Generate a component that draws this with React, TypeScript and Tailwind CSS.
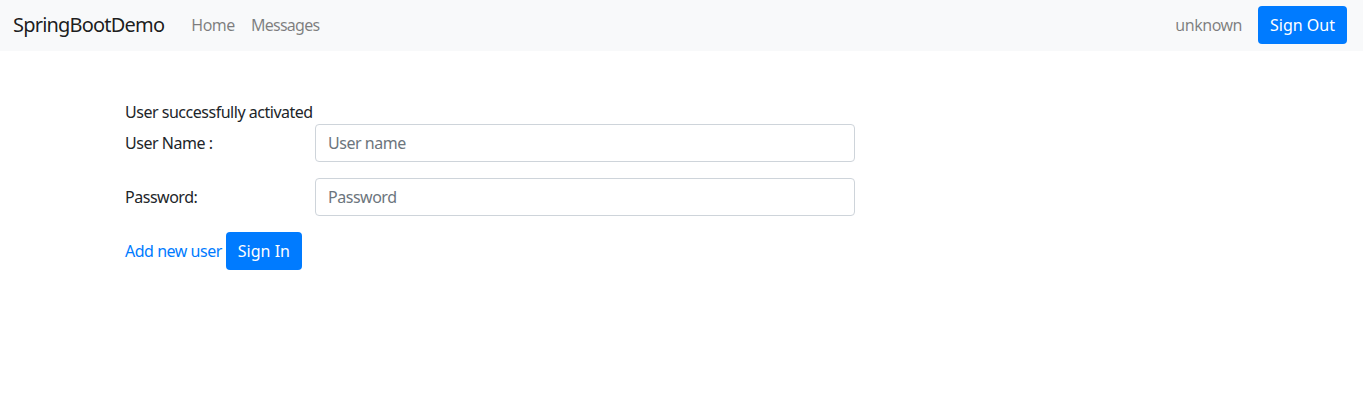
export default function App() {
  const font = { fontFamily: '"Noto Sans", "Liberation Sans", sans-serif' };
  return (
    <div className="min-h-[405px] bg-white text-[#212529] tracking-[-0.03em]" style={font}>
      <nav className="flex h-[51px] items-center justify-between bg-[#f8f9fa] pb-[2px] pl-[13px] pr-[16px]">
        <div className="flex items-center">
          <a href="#" className="mr-[19px] text-[20px] leading-[30px] tracking-[-0.04em] text-[rgba(0,0,0,0.9)]">
            SpringBootDemo
          </a>
          <a href="#" className="px-[8px] text-[16px] leading-[24px] text-[rgba(0,0,0,0.5)]">
            Home
          </a>
          <a href="#" className="px-[8px] text-[16px] leading-[24px] tracking-[-0.045em] text-[rgba(0,0,0,0.5)]">
            Messages
          </a>
        </div>
        <div className="flex items-center">
          <span className="mr-[16px] text-[16px] leading-[24px] text-[rgba(0,0,0,0.5)]">unknown</span>
          <button className="h-[38px] rounded-[4px] bg-[#007bff] px-[12px] text-[16px] tracking-normal text-white">
            Sign Out
          </button>
        </div>
      </nav>

      <div className="pl-[125px] pt-[49px]">
        <p className="text-[16px] leading-[24px]">User successfully activated</p>
        <form className="flex flex-col gap-[16px]">
          <div className="flex items-center">
            <label className="w-[190px] text-[16px] leading-[24px]">User Name :</label>
            <input
              type="text"
              placeholder="User name"
              className="h-[38px] w-[540px] rounded-[4px] border border-[#ced4da] px-[12px] text-[16px] placeholder:text-[#6c757d]"
            />
          </div>
          <div className="flex items-center">
            <label className="w-[190px] text-[16px] leading-[24px]">Password:</label>
            <input
              type="password"
              placeholder="Password"
              className="h-[38px] w-[540px] rounded-[4px] border border-[#ced4da] px-[12px] text-[16px] placeholder:text-[#6c757d]"
            />
          </div>
          <div className="flex items-center">
            <a href="#" className="text-[16px] leading-[24px] text-[#007bff]">
              Add new user
            </a>
            <button className="ml-[4px] h-[38px] rounded-[4px] bg-[#007bff] px-[12px] text-[16px] tracking-normal text-white">
              Sign In
            </button>
          </div>
        </form>
      </div>
    </div>
  );
}
